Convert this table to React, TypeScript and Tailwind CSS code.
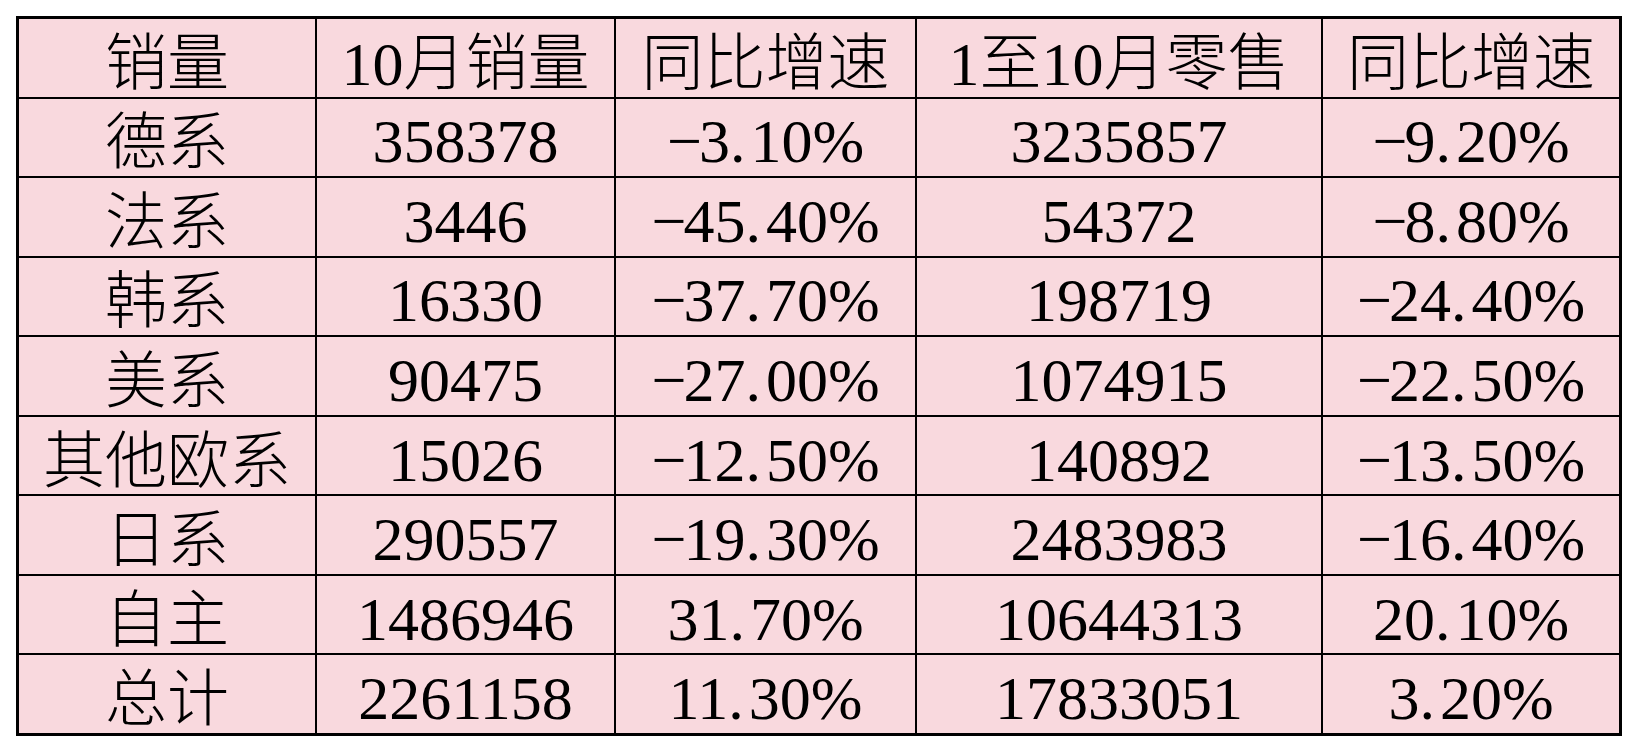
const HEAD = ["销量", "10月销量", "同比增速", "1至10月零售", "同比增速"];

const ROWS: string[][] = [
  ["德系", "358378", "-3.10%", "3235857", "-9.20%"],
  ["法系", "3446", "-45.40%", "54372", "-8.80%"],
  ["韩系", "16330", "-37.70%", "198719", "-24.40%"],
  ["美系", "90475", "-27.00%", "1074915", "-22.50%"],
  ["其他欧系", "15026", "-12.50%", "140892", "-13.50%"],
  ["日系", "290557", "-19.30%", "2483983", "-16.40%"],
  ["自主", "1486946", "31.70%", "10644313", "20.10%"],
  ["总计", "2261158", "11.30%", "17833051", "3.20%"],
];

// percentages: long minus, small gap after the period as in the sheet
function Value({ text }: { text: string }) {
  const neg = text.startsWith("-");
  const body = neg ? text.slice(1) : text;
  const dot = body.indexOf(".");
  if (dot < 0) return <>{text}</>;
  return (
    <>
      {neg && <span className="inline-block w-[32px] text-left">−</span>}
      {body.slice(0, dot)}
      <span className="mr-[5px]">.</span>
      {body.slice(dot + 1)}
    </>
  );
}

export default function App() {
  return (
    <div className="w-[1638px] h-[752px] bg-white pt-[16px] pl-[16px]">
      <div
        className="grid grid-cols-[296px_297px_299px_404px_296px] grid-rows-9 gap-[2px] w-[1606px] h-[720px] border-[3px] border-black bg-black text-black text-[62px] leading-none"
        style={{ fontFamily: '"Liberation Serif", "Noto Sans CJK SC", serif' }}
      >
        {HEAD.map((h, i) => (
          <div key={"h" + i} className="bg-[#f9d9de] flex items-center justify-center pt-[12px] font-light whitespace-nowrap">
            {h}
          </div>
        ))}
        {ROWS.map((r) =>
          r.map((c, i) => (
            <div
              key={r[0] + i}
              className={
                i === 0
                  ? "bg-[#f9d9de] flex items-center justify-center pt-[12px] font-light whitespace-nowrap"
                  : "bg-[#f9d9de] flex items-center justify-center pt-[8px] whitespace-nowrap"
              }
            >
              <span>
                <Value text={c} />
              </span>
            </div>
          ))
        )}
      </div>
    </div>
  );
}
